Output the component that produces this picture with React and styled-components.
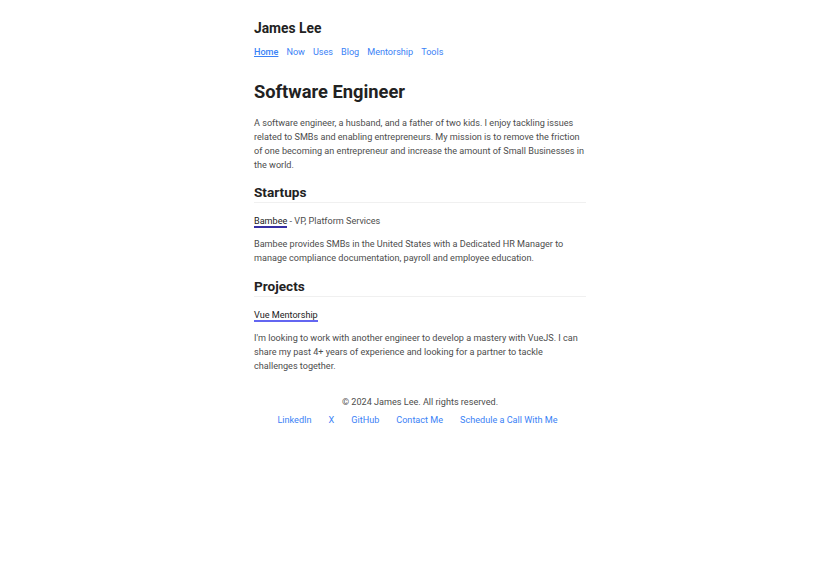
import React from "react";
import styled, { createGlobalStyle } from "styled-components";

const GlobalStyle = createGlobalStyle`
  html, body {
    margin: 0;
    padding: 0;
    background: #ffffff;
  }
  body {
    font-family: Roboto, "Liberation Sans", sans-serif;
    -webkit-font-smoothing: antialiased;
  }
`;

const Page = styled.div`
  width: 332px;
  margin: 0 auto;
  padding-top: 19px;
`;

const Header = styled.header`
  display: flex;
  flex-direction: column;
  gap: 8px;
`;

const SiteName = styled.div`
  font-size: 13.8px;
  font-weight: 700;
  color: #222;
  line-height: 18px;
`;

const Nav = styled.nav`
  display: flex;
  gap: 8px;
`;

const NavLink = styled.a`
  font-size: 9.1px;
  line-height: 14px;
  color: #3b82f6;
  text-decoration: ${({ active }) => (active ? "underline" : "none")};
  font-weight: ${({ active }) => (active ? 500 : 400)};
  cursor: pointer;
`;

const Title = styled.h1`
  margin: 21px 0 0;
  font-size: 18.3px;
  line-height: 24px;
  font-weight: 700;
  color: #222;
`;

const Text = styled.p`
  margin: ${({ top }) => top ?? 14}px 0 0;
  font-size: 9.1px;
  line-height: 14px;
  color: #4d4d4d;
`;

const SectionTitle = styled.h2`
  margin: ${({ top }) => top ?? 11}px 0 0;
  padding-bottom: 1px;
  border-bottom: 1px solid #f0f0f0;
  font-size: 13.6px;
  line-height: 18px;
  font-weight: 700;
  color: #222;
`;

const Entry = styled.div`
  margin-top: 11px;
  font-size: 9.1px;
  line-height: 14px;
  color: #4d4d4d;
`;

const EntryLink = styled.a`
  color: #222;
  text-decoration: none;
  border-bottom: 2px solid ${({ tone }) => tone};
`;

const Footer = styled.footer`
  margin-top: 22px;
  display: flex;
  flex-direction: column;
  align-items: center;
  gap: 4px;
`;

const Copyright = styled.div`
  font-size: 9.1px;
  line-height: 14px;
  color: #4d4d4d;
`;

const FooterLinks = styled.div`
  display: flex;
  gap: 17px;
  padding-right: 5px;
`;

const FooterLink = styled.a`
  font-size: 9.1px;
  line-height: 14px;
  color: #3b82f6;
  text-decoration: none;
`;

const navItems = ["Home", "Now", "Uses", "Blog", "Mentorship", "Tools"];
const footerItems = ["LinkedIn", "X", "GitHub", "Contact Me", "Schedule a Call With Me"];

export default function App() {
  return (
    <>
      <GlobalStyle />
      <Page>
        <Header>
          <SiteName>James Lee</SiteName>
          <Nav>
            {navItems.map((item, i) => (
              <NavLink key={item} active={i === 0}>
                {item}
              </NavLink>
            ))}
          </Nav>
        </Header>

        <Title>Software Engineer</Title>
        <Text top={12}>
          A software engineer, a husband, and a father of two kids. I enjoy
          tackling issues related to SMBs and enabling entrepreneurs. My mission
          is to remove the friction of one becoming an entrepreneur and increase
          the amount of Small Businesses in the world.
        </Text>

        <SectionTitle>Startups</SectionTitle>
        <Entry>
          <EntryLink tone="#3730a3">Bambee</EntryLink> - VP, Platform Services
        </Entry>
        <Text top={9}>
          Bambee provides SMBs in the United States with a Dedicated HR Manager
          to manage compliance documentation, payroll and employee education.
        </Text>

        <SectionTitle top={12}>Projects</SectionTitle>
        <Entry>
          <EntryLink tone="#6366f1">Vue Mentorship</EntryLink>
        </Entry>
        <Text top={9}>
          I'm looking to work with another engineer to develop a mastery with
          VueJS. I can share my past 4+ years of experience and looking for a
          partner to tackle challenges together.
        </Text>

        <Footer>
          <Copyright>© 2024 James Lee. All rights reserved.</Copyright>
          <FooterLinks>
            {footerItems.map((item) => (
              <FooterLink key={item}>{item}</FooterLink>
            ))}
          </FooterLinks>
        </Footer>
      </Page>
    </>
  );
}
